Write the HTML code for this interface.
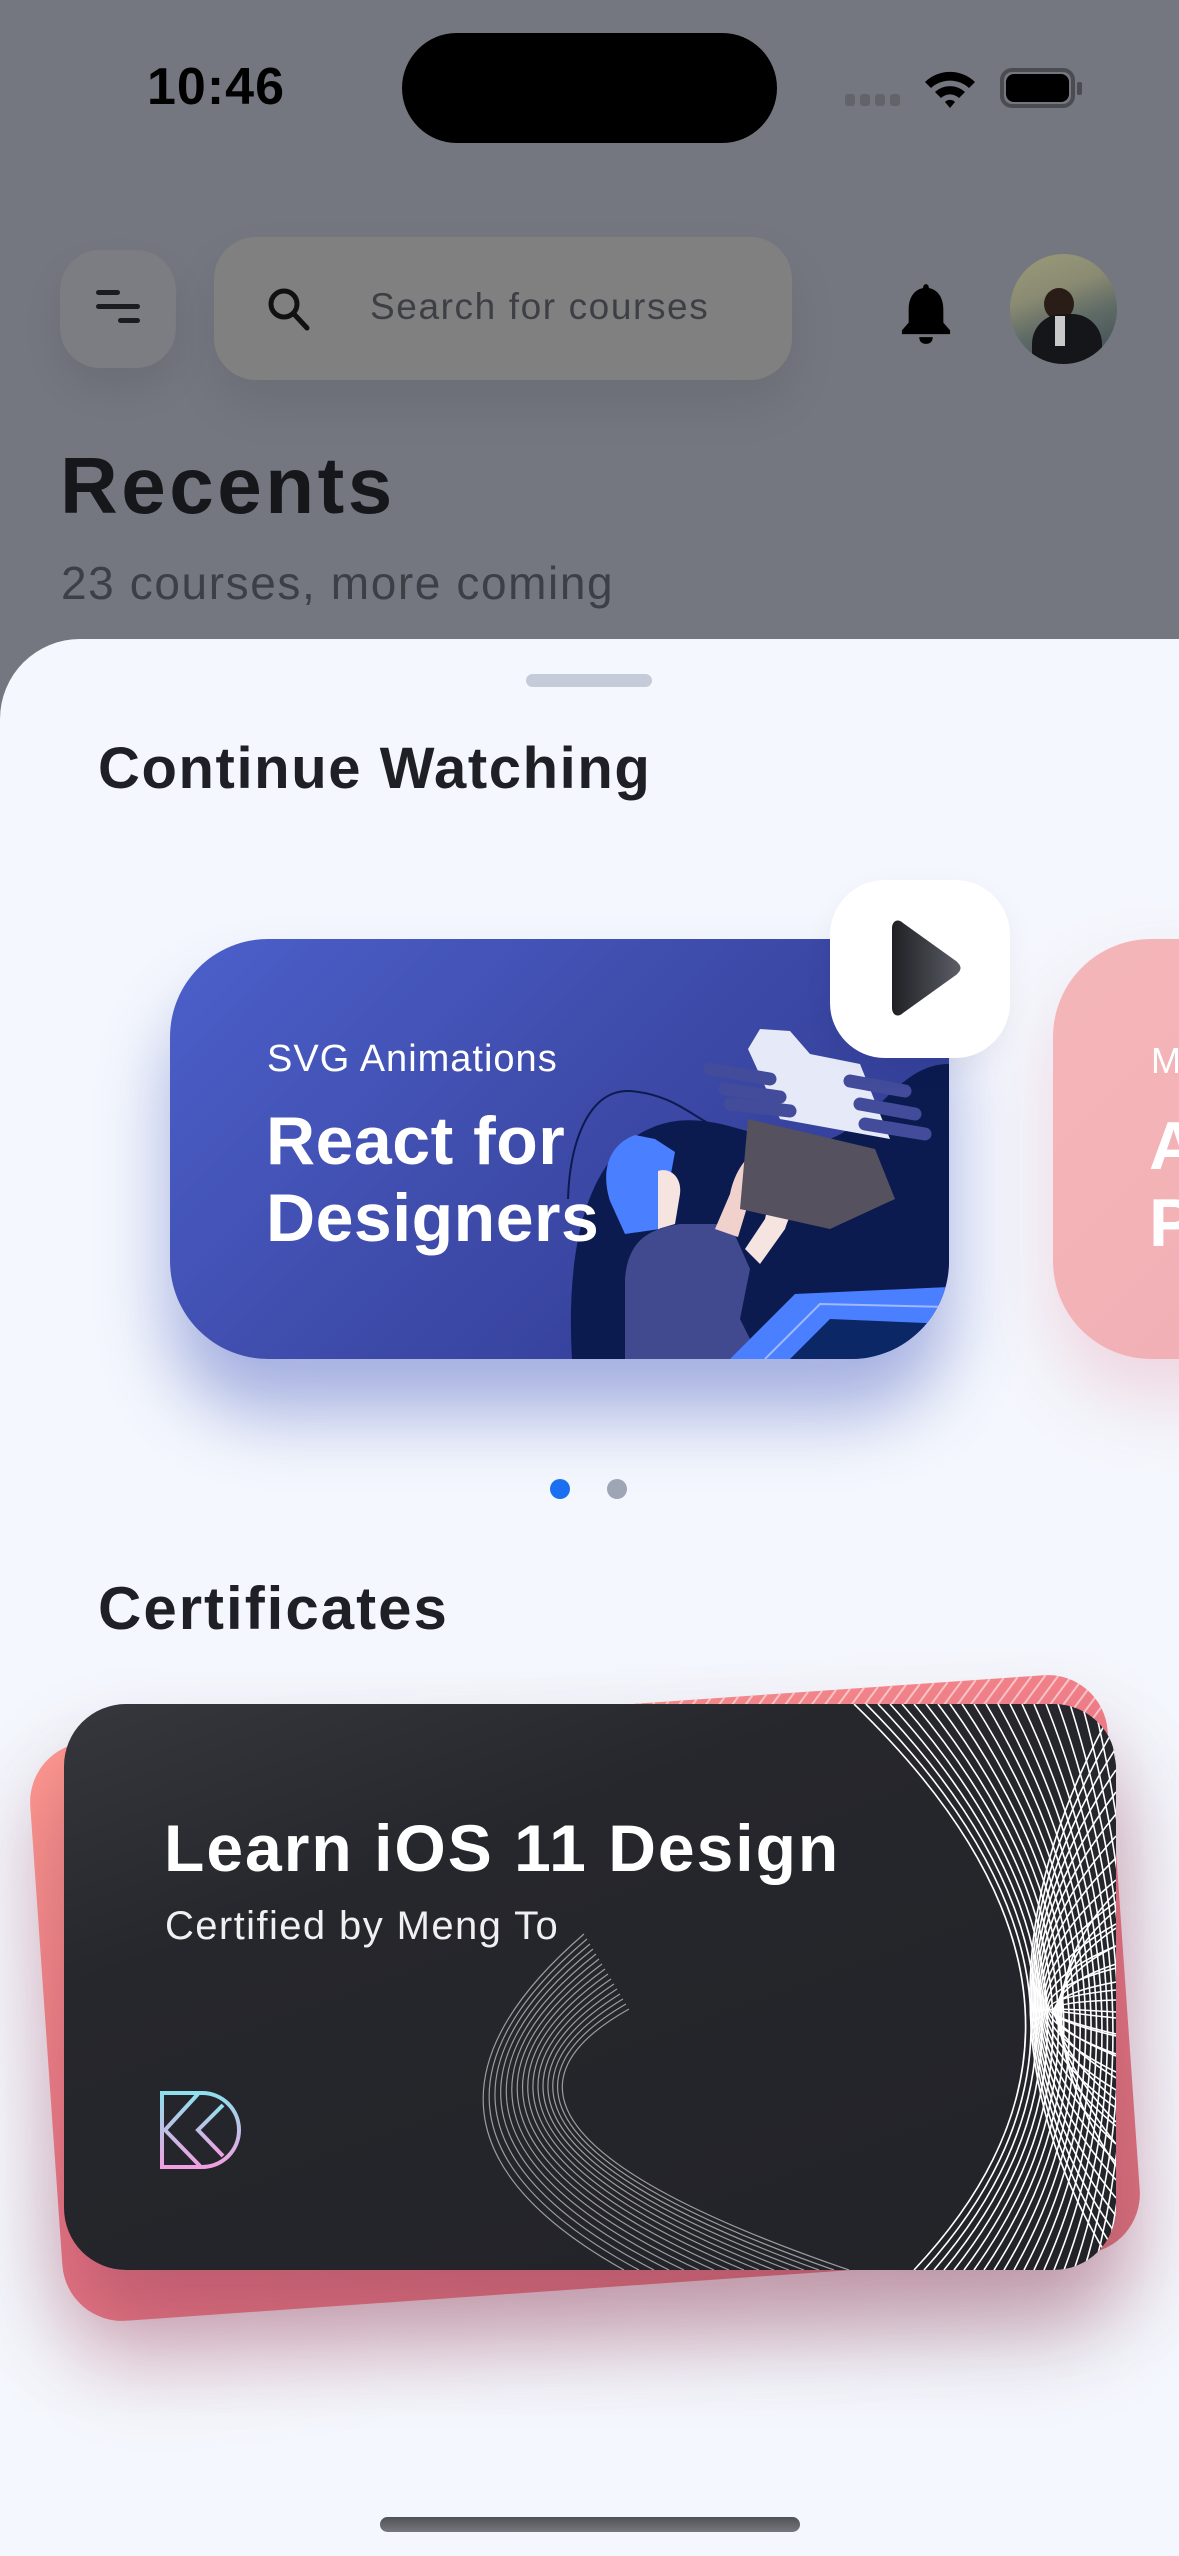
<!DOCTYPE html>
<html><head><meta charset="utf-8">
<style>
*{margin:0;padding:0;box-sizing:border-box}
body{width:1179px;height:2556px;overflow:hidden;background:#74777f;font-family:"Liberation Sans",sans-serif;position:relative}
.abs{position:absolute}
</style></head><body>
<!-- status bar -->
<div class="abs" style="left:147px;top:57px;font-size:52px;font-weight:bold;color:#000;letter-spacing:1px">10:46</div>
<div class="abs" style="left:402px;top:33px;width:375px;height:110px;border-radius:55px;background:#000"></div>
<div class="abs" style="left:845px;top:94px;width:60px;height:12px">
 <div class="abs" style="left:0;top:0;width:10px;height:12px;border-radius:3px;background:#62646a"></div>
 <div class="abs" style="left:15px;top:0;width:10px;height:12px;border-radius:3px;background:#62646a"></div>
 <div class="abs" style="left:30px;top:0;width:10px;height:12px;border-radius:3px;background:#62646a"></div>
 <div class="abs" style="left:45px;top:0;width:10px;height:12px;border-radius:3px;background:#62646a"></div>
</div>
<svg class="abs" style="left:922px;top:68px" width="56" height="42" viewBox="0 0 56 42"><path d="M3 14 A36 36 0 0 1 53 14 L47 20 A28 28 0 0 0 9 20Z M13 24 A22 22 0 0 1 43 24 L37 30 A13 13 0 0 0 19 30Z M23 34 A7 7 0 0 1 33 34 L28 40Z" fill="#000"/></svg>
<div class="abs" style="left:1000px;top:68px;width:75px;height:40px;border:4px solid #4a4c52;border-radius:12px"></div>
<div class="abs" style="left:1006px;top:74px;width:63px;height:28px;border-radius:8px;background:#000"></div>
<div class="abs" style="left:1077px;top:82px;width:5px;height:13px;border-radius:2px;background:#4a4c52"></div>

<!-- top bar -->
<div class="abs" style="left:60px;top:250px;width:116px;height:118px;border-radius:40px;background:#7b7d82;box-shadow:0 20px 40px rgba(0,0,0,0.08)"></div>
<div class="abs" style="left:96px;top:290px;width:24px;height:5px;border-radius:3px;background:#1b1c20"></div>
<div class="abs" style="left:96px;top:304px;width:44px;height:5px;border-radius:3px;background:#1b1c20"></div>
<div class="abs" style="left:118px;top:318px;width:22px;height:5px;border-radius:3px;background:#1b1c20"></div>
<div class="abs" style="left:214px;top:237px;width:578px;height:143px;border-radius:42px;background:#808080;box-shadow:0 25px 50px rgba(0,0,0,0.08)"></div>
<svg class="abs" style="left:266px;top:286px" width="50" height="50" viewBox="0 0 50 50"><circle cx="18" cy="18" r="13" stroke="#111" stroke-width="5" fill="none"/><path d="M28 28 L41 42" stroke="#111" stroke-width="5" stroke-linecap="round"/></svg>
<div class="abs" style="left:370px;top:286px;font-size:37px;color:#3d3f45;letter-spacing:1.6px">Search for courses</div>
<svg class="abs" style="left:900px;top:280px" width="52" height="66" viewBox="0 0 54 68"><path d="M27 4 C29 4 30 6 30 8 C40 10 45 19 45 30 L45 44 L52 52 L52 56 L2 56 L2 52 L9 44 L9 30 C9 19 14 10 24 8 C24 6 25 4 27 4Z" fill="#000"/><path d="M20 59 L34 59 C34 64 31 66 27 66 C23 66 20 64 20 59Z" fill="#000"/></svg>
<div class="abs" style="left:1010px;top:254px;width:107px;height:110px;border-radius:50%;overflow:hidden;background:linear-gradient(160deg,#9a9a7a 0%,#8a8b72 35%,#5f6b66 60%,#3b4a50 100%)">
 <div class="abs" style="left:34px;top:34px;width:30px;height:32px;border-radius:50%;background:#2a1d18"></div>
 <div class="abs" style="left:22px;top:60px;width:70px;height:60px;border-radius:30px 30px 0 0;background:#15161a"></div>
 <div class="abs" style="left:45px;top:62px;width:10px;height:30px;background:#c9c9c9"></div>
</div>

<div class="abs" style="left:60px;top:440px;font-size:80px;font-weight:bold;color:#16171a;letter-spacing:3.5px">Recents</div>
<div class="abs" style="left:61px;top:556px;font-size:46px;color:#3d3f46;letter-spacing:1.6px">23 courses, more coming</div>

<!-- sheet -->
<div class="abs" style="left:0;top:639px;width:1179px;height:1917px;background:#f4f7fd;border-radius:80px 0 0 0"></div>
<div class="abs" style="left:526px;top:674px;width:126px;height:13px;border-radius:7px;background:#c5cbd8"></div>
<div class="abs" style="left:98px;top:735px;font-size:58px;font-weight:bold;color:#1f2025;letter-spacing:1.6px">Continue Watching</div>

<!-- pink card -->
<div class="abs" style="left:1053px;top:939px;width:500px;height:420px;border-radius:98px;background:linear-gradient(135deg,#f5b6b9,#eeacb2);box-shadow:0 40px 70px rgba(230,140,160,0.3)"></div>
<div class="abs" style="left:1151px;top:1040px;font-size:36px;color:#fff">M</div>
<div class="abs" style="left:1149px;top:1108px;font-size:68px;font-weight:bold;color:#fff;line-height:77px">A<br>P</div>

<!-- blue card -->
<div class="abs" style="left:170px;top:939px;width:779px;height:420px;border-radius:98px;background:linear-gradient(135deg,#4c60cb 0%,#3d4aa8 50%,#2c388e 100%);box-shadow:0 55px 70px rgba(70,90,190,0.45);overflow:hidden">
 <svg class="abs" style="left:0;top:0" width="779" height="420" viewBox="0 0 779 420">
  <path d="M402 420 C395 300 420 200 500 183 C560 172 610 218 660 200 C710 180 730 125 779 125 L779 420Z" fill="#0c1b4f"/>
  <path d="M398 260 C400 200 420 150 460 152 C500 155 520 175 540 185" stroke="#0c1b4f" stroke-width="2" fill="none"/>
  <path d="M455 420 L455 340 C458 300 480 290 510 285 L560 285 L580 330 L570 380 L590 420Z" fill="#414a8f"/>
  <path d="M545 290 L560 255 C565 230 580 210 600 205 L605 218 C590 228 582 245 578 265 L568 298Z" fill="#f0d1cb"/>
  <path d="M575 310 L595 280 C600 255 620 235 650 230 L660 244 C635 252 622 268 615 290 L590 325Z" fill="#f6e4e1"/>
  <path d="M440 262 C430 230 440 205 465 196 L485 200 L505 213 L500 240 L490 250 L490 290 L455 295Z" fill="#4a7fff"/>
  <path d="M488 232 C500 228 512 238 510 255 L505 285 L488 290Z" fill="#f6e4e1"/>
  <path d="M578 180 L705 210 L725 260 L660 290 L570 270Z" fill="#55515f"/>
  <path d="M578 110 L590 90 L620 92 L640 115 L690 125 L720 200 L610 180Z" fill="#e6e9f7"/>
  <path d="M540 130 L600 140 M555 150 L610 158 M560 165 L620 172 M680 142 L735 152 M690 165 L745 175 M695 185 L755 195" stroke="#424c9a" stroke-width="13" stroke-linecap="round"/>
  <path d="M560 420 L625 355 L779 348 L779 420Z" fill="#4a7fff"/>
  <path d="M595 420 L650 365 L779 368" stroke="#9fb9ff" stroke-width="2" fill="none"/>
  <path d="M620 420 L660 380 L779 385 L779 420Z" fill="#0c2766"/>
 </svg>
 <div class="abs" style="left:97px;top:99px;font-size:38px;color:#fff;letter-spacing:1px">SVG Animations</div>
 <div class="abs" style="left:96px;top:164px;font-size:68px;font-weight:bold;color:#fff;line-height:77px;letter-spacing:0.5px">React for<br>Designers</div>
</div>
<!-- play button -->
<div class="abs" style="left:830px;top:880px;width:180px;height:178px;border-radius:55px;background:#fff;box-shadow:0 10px 30px rgba(0,0,0,0.05)"></div>
<svg class="abs" style="left:886px;top:918px" width="80" height="100" viewBox="0 0 80 100"><defs><linearGradient id="pg" x1="0" x2="1"><stop offset="0" stop-color="#1f2024"/><stop offset="1" stop-color="#5b5e66"/></linearGradient></defs><path d="M6 10 C6 3 12 0 17 5 L70 43 C76 48 76 52 70 57 L17 95 C12 100 6 97 6 90Z" fill="url(#pg)"/></svg>

<!-- dots -->
<div class="abs" style="left:550px;top:1479px;width:20px;height:20px;border-radius:50%;background:#1b6ff0"></div>
<div class="abs" style="left:607px;top:1479px;width:20px;height:20px;border-radius:50%;background:#9ea6b5"></div>

<div class="abs" style="left:98px;top:1574px;font-size:60px;font-weight:bold;color:#1f2025;letter-spacing:2px">Certificates</div>

<!-- back pink card -->
<div class="abs" style="left:45px;top:1708px;width:1080px;height:580px;border-radius:60px;background:linear-gradient(160deg,#ff9a90 0%,#ee7a88 50%,#d9727e 100%);transform:rotate(-4deg);overflow:hidden;box-shadow:0 50px 80px rgba(200,90,110,0.25)">
 <svg class="abs" style="left:0;top:0" width="1080" height="580"><g stroke="#ffffff" stroke-opacity="0.55" stroke-width="2" id="hatch"></g></svg>
</div>

<!-- dark card -->
<div class="abs" style="left:64px;top:1704px;width:1052px;height:566px;border-radius:62px;background:linear-gradient(160deg,#36373d 0%,#26272c 30%,#222328 100%);overflow:hidden;box-shadow:0 60px 90px rgba(110,40,70,0.35)">
 <svg class="abs" style="left:0;top:0" width="1052" height="566"><g id="lines" fill="none" stroke="#fff" stroke-width="1.6"></g><g id="lines2" fill="none" stroke="#fff" stroke-opacity="0.55" stroke-width="1.2"></g></svg>
 <div class="abs" style="left:100px;top:106px;font-size:66px;font-weight:bold;color:#fff;letter-spacing:2px">Learn iOS 11 Design</div>
 <div class="abs" style="left:101px;top:200px;font-size:40px;color:#f0f0f2;letter-spacing:1.4px">Certified by Meng To</div>
 <svg class="abs" style="left:76px;top:366px" width="120" height="120" viewBox="0 0 120 120"><defs><linearGradient id="lg" x1="0" y1="0" x2="0" y2="1"><stop offset="0" stop-color="#8fe0ee"/><stop offset="1" stop-color="#f0a0e0"/></linearGradient></defs><g fill="none" stroke="url(#lg)" stroke-width="4"><path d="M22 23 L62 23 A37 37 0 0 1 62 97 L22 97Z"/><path d="M58 24 L25 60 L60 96"/><path d="M83 35 L58 60 L83 86"/></g></svg>
</div>

<!-- home indicator -->
<div class="abs" style="left:380px;top:2517px;width:420px;height:15px;border-radius:8px;background:linear-gradient(#505257,#76787d)"></div>

<script>
var g=document.getElementById('lines'),g2=document.getElementById('lines2'),h=document.getElementById('hatch'),ns='http://www.w3.org/2000/svg';
function p(par,d){var e=document.createElementNS(ns,'path');e.setAttribute('d',d);par.appendChild(e);}
for(var i=0;i<22;i++){
 p(g,'M'+(790+i*12)+' 0 Q1100 300 '+(850+i*10)+' 566');
 p(g,'M1052 '+(i*22)+' Q'+(880+i*3)+' 300 1052 '+(566-i*18));
}
for(var j=0;j<16;j++){
 p(g2,'M'+(520+j*3)+' '+(230+j*5)+' Q'+(300+j*4)+' 420 '+(560+j*15)+' 566');
}
for(var k=0;k<40;k++){var x=560+k*14;var e=document.createElementNS(ns,'line');e.setAttribute('x1',x);e.setAttribute('y1',0);e.setAttribute('x2',x-60);e.setAttribute('y2',70);h.appendChild(e);}
</script>
</body></html>
